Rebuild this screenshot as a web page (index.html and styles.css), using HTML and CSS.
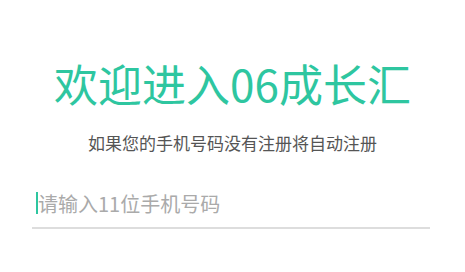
FILE: index.html
```html
<!DOCTYPE html>
<html lang="zh">
<head>
<meta charset="utf-8">
<link rel="stylesheet" href="styles.css">
</head>
<body>
<main class="page">
  <h1 class="title">欢迎进入06成长汇</h1>
  <p class="subtitle">如果您的手机号码没有注册将自动注册</p>
  <div class="field">
    <span class="caret"></span>
    <span class="placeholder">请输入11位手机号码</span>
  </div>
</main>
</body>
</html>
```
FILE: styles.css
```css
html, body {
  margin: 0;
  padding: 0;
  background: #ffffff;
}
.page {
  width: 465px;
  height: 272px;
  display: flex;
  flex-direction: column;
  font-family: "Noto Sans CJK SC", "Noto Sans", sans-serif;
}
.title {
  margin: 57px 0 0 0;
  font-size: 44px;
  line-height: 52px;
  font-weight: 400;
  color: #2ec6a0;
  text-align: center;
}
.subtitle {
  margin: 22px 0 0 0;
  font-size: 17px;
  line-height: 24px;
  color: #555555;
  text-align: center;
}
.field {
  margin: 31px 35px 0 32px;
  padding-top: 6px;
  display: flex;
  align-items: flex-start;
  height: 35px;
  border-bottom: 2px solid #dddddd;
}
.caret {
  width: 2px;
  height: 22px;
  margin-left: 4px;
  background: #2ec6a0;
}
.placeholder {
  font-size: 20px;
  line-height: 24px;
  color: #aaaaaa;
}
```
